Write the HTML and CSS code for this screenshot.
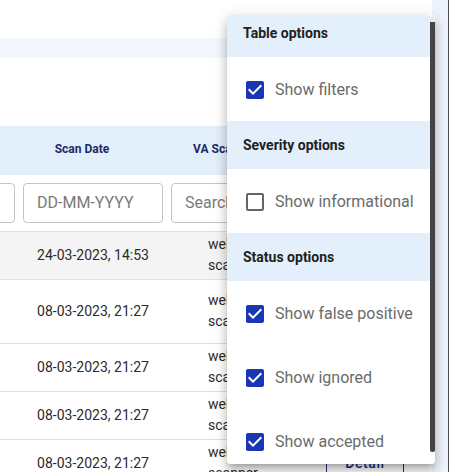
FILE: index.html
```html
<!DOCTYPE html>
<html lang="en">
<head>
<meta charset="utf-8">
<title>Scans</title>
<link rel="stylesheet" href="styles.css">
</head>
<body>
<div class="page">
  <main class="main">
    <div class="top"></div>
    <div class="band"></div>
    <div class="spacer"></div>
    <div class="table-wrap">
      <table class="grid">
        <colgroup>
          <col class="c-name"><col class="c-date"><col class="c-scanner"><col class="c-action"><col class="c-extra">
        </colgroup>
        <thead>
          <tr class="head">
            <th><span class="sort">Name<i class="sort-gap"></i></span></th>
            <th><span class="sort">Scan Date<i class="sort-gap"></i></span></th>
            <th><span class="sort">VA Scanner<i class="sort-gap wide"></i></span></th>
            <th></th>
            <th></th>
          </tr>
          <tr class="filters">
            <td><input class="field" placeholder="Search"></td>
            <td><input class="field" placeholder="DD-MM-YYYY"></td>
            <td><input class="field" placeholder="Search"></td>
            <td></td>
            <td></td>
          </tr>
        </thead>
        <tbody>
          <tr class="row hover">
            <td>scan-01</td><td class="date">24-03-2023, 14:53</td><td class="scanner">web scanner</td><td class="act"><button class="detail">Detail</button></td><td></td>
          </tr>
          <tr class="row tall">
            <td>scan-02</td><td class="date">08-03-2023, 21:27</td><td class="scanner">web scanner</td><td class="act"><button class="detail">Detail</button></td><td></td>
          </tr>
          <tr class="row">
            <td>scan-03</td><td class="date">08-03-2023, 21:27</td><td class="scanner">web scanner</td><td class="act"><button class="detail">Detail</button></td><td></td>
          </tr>
          <tr class="row">
            <td>scan-04</td><td class="date">08-03-2023, 21:27</td><td class="scanner">web scanner</td><td class="act"><button class="detail">Detail</button></td><td></td>
          </tr>
          <tr class="row">
            <td>scan-05</td><td class="date">08-03-2023, 21:27</td><td class="scanner">web scanner</td><td class="act"><button class="detail">Detail</button></td><td></td>
          </tr>
        </tbody>
      </table>
    </div>
  </main>
  <aside class="rail"></aside>

  <div class="menu">
    <div class="menu-body">
      <div class="sec first">Table options</div>
      <label class="opt"><svg class="cb on" viewBox="0 0 24 24"><path d="M19 3H5c-1.11 0-2 .9-2 2v14c0 1.1.89 2 2 2h14c1.11 0 2-.9 2-2V5c0-1.1-.89-2-2-2zm-9 14l-5-5 1.41-1.41L10 14.17l7.590-7.59L19 8l-9 9z"/></svg><span>Show filters</span></label>
      <div class="sec">Severity options</div>
      <label class="opt"><svg class="cb off" viewBox="0 0 24 24"><path d="M19 5v14H5V5h14m0-2H5c-1.1 0-2 .9-2 2v14c0 1.1.9 2 2 2h14c1.1 0 2-.9 2-2V5c0-1.1-.9-2-2-2z"/></svg><span>Show informational</span></label>
      <div class="sec">Status options</div>
      <label class="opt"><svg class="cb on" viewBox="0 0 24 24"><path d="M19 3H5c-1.11 0-2 .9-2 2v14c0 1.1.89 2 2 2h14c1.11 0 2-.9 2-2V5c0-1.1-.89-2-2-2zm-9 14l-5-5 1.41-1.41L10 14.17l7.59-7.59L19 8l-9 9z"/></svg><span>Show false positive</span></label>
      <label class="opt"><svg class="cb on" viewBox="0 0 24 24"><path d="M19 3H5c-1.11 0-2 .9-2 2v14c0 1.1.89 2 2 2h14c1.11 0 2-.9 2-2V5c0-1.1-.89-2-2-2zm-9 14l-5-5 1.41-1.41L10 14.17l7.59-7.59L19 8l-9 9z"/></svg><span>Show ignored</span></label>
      <label class="opt"><svg class="cb on" viewBox="0 0 24 24"><path d="M19 3H5c-1.11 0-2 .9-2 2v14c0 1.1.89 2 2 2h14c1.11 0 2-.9 2-2V5c0-1.1-.89-2-2-2zm-9 14l-5-5 1.41-1.41L10 14.17l7.59-7.59L19 8l-9 9z"/></svg><span>Show accepted</span></label>
    </div>
    <div class="scroll"><div class="cap"></div><div class="thumb"></div></div>
  </div>
</div>
</body>
</html>
```

FILE: styles.css
```css
* { box-sizing: border-box; }

html, body {
  margin: 0;
  padding: 0;
  background: #ffffff;
  font-family: Roboto, "Liberation Sans", sans-serif;
}

.page {
  position: relative;
  display: flex;
  width: 449px;
  height: 472px;
  overflow: hidden;
}

.main {
  flex: 0 0 432px;
  overflow: hidden;
  background: #ffffff;
}

.rail {
  flex: 0 0 17px;
  background: #eef3fc;
  border-right: 1px solid #4d4d4d;
}

.top { height: 38px; }
.band { height: 20px; background: #f3f7fd; }
.spacer { height: 68px; }

.table-wrap {
  margin-left: -100px;
  width: 634px;
}

.grid {
  border-collapse: collapse;
  table-layout: fixed;
  width: 634px;
}

.c-name { width: 119px; }
.c-date { width: 148px; }
.c-scanner { width: 149px; }
.c-action { width: 98px; }
.c-extra { width: 120px; }

.head th {
  height: 49px;
  padding: 0 4px 4px;
  background: #e3effa;
  color: #1c2a6b;
  font-size: 12px;
  font-weight: 700;
  text-align: center;
  vertical-align: middle;
}

.sort {
  display: inline-flex;
  align-items: center;
  white-space: nowrap;
}

.sort-gap {
  display: inline-block;
  width: 18px;
  height: 18px;
  margin-left: 4px;
}

.sort-gap.wide { width: 30px; }

.filters td {
  height: 56px;
  padding: 0 4px;
  vertical-align: middle;
  border-bottom: 1px solid #e0e0e0;
}

.field {
  display: block;
  width: 100%;
  height: 40px;
  padding: 0 13px;
  border: 1px solid #c4c4c4;
  border-radius: 4px;
  font-family: Roboto, "Liberation Sans", sans-serif;
  font-size: 16px;
  color: #333333;
  background: #ffffff;
}

.field::placeholder { color: #7a7a7a; opacity: 1; }

.row td {
  height: 48px;
  padding: 0 4px;
  font-size: 14px;
  line-height: 21px;
  color: #2b2b2b;
  vertical-align: middle;
  border-bottom: 1px solid #e0e0e0;
}

.row.tall td { height: 64px; }
.row.hover td { background: #f4f4f4; }

.row .date { text-align: center; }
.row .scanner { padding-left: 41px; padding-right: 41px; }

.row .act { padding: 0 10px; text-align: center; }

.detail {
  width: 78px;
  height: 31px;
  border: 1px solid #1d2f8c;
  border-radius: 4px;
  background: #ffffff;
  color: #1d2f8c;
  font-family: Roboto, "Liberation Sans", sans-serif;
  font-size: 14px;
  font-weight: 500;
  letter-spacing: 0.6px;
}

/* options menu overlay */
.menu {
  position: absolute;
  top: 15px;
  left: 227px;
  width: 208px;
  height: 449px;
  display: flex;
  background: #ffffff;
  border-radius: 4px;
  overflow: hidden;
  box-shadow: 0 5px 5px -3px rgba(0,0,0,0.2), 0 8px 10px 1px rgba(0,0,0,0.14), 0 3px 14px 2px rgba(0,0,0,0.12);
}

.menu-body {
  flex: 0 0 203px;
  overflow: hidden;
}

.sec {
  height: 48px;
  display: flex;
  align-items: center;
  padding-left: 16px;
  background: #e3effa;
  color: #212121;
  font-size: 14px;
  font-weight: 700;
}

.sec.first { margin-top: -6px; }

.opt {
  height: 64px;
  display: flex;
  align-items: center;
  padding-left: 16px;
  padding-top: 1px;
  font-size: 16px;
  color: #6b6b6b;
  white-space: nowrap;
}

.cb {
  width: 24px;
  height: 24px;
  flex: 0 0 24px;
  margin-right: 8px;
}

.cb.on { fill: #1b36b3; }
.cb.off { fill: #666666; }

.scroll {
  flex: 0 0 5px;
  display: flex;
  flex-direction: column;
  background: #ffffff;
  padding-bottom: 12px;
}

.cap {
  height: 6px;
  margin: 1px 0 0;
  background: #e8e8e8;
  border-radius: 3px 3px 0 0;
}

.thumb {
  flex: 1;
  background: #444444;
  border-radius: 0 0 2px 2px;
}
```
